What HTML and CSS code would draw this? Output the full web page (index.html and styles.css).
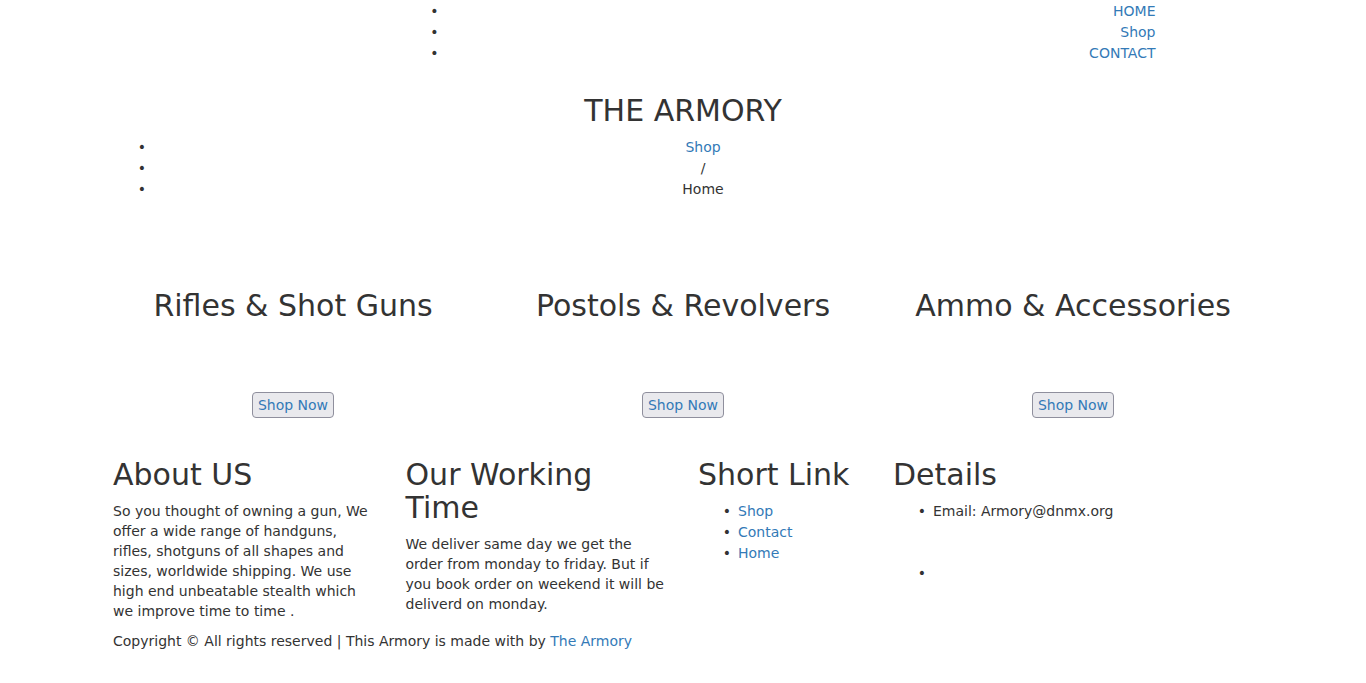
FILE: index.html
```html
<!DOCTYPE html>
<html lang="en">
<head>
<meta charset="utf-8">
<title>The Armory</title>
<link rel="stylesheet" href="styles.css">
</head>
<body>
<header class="container">
  <div class="row">
    <div class="col col-3"></div>
    <div class="col col-8">
      <ul class="topnav">
        <li><a href="#">HOME</a></li>
        <li><a href="#">Shop</a></li>
        <li><a href="#">CONTACT</a></li>
      </ul>
    </div>
  </div>
  <h2 class="brand">THE ARMORY</h2>
  <ul class="crumbs">
    <li><a href="#">Shop</a></li>
    <li>/</li>
    <li>Home</li>
  </ul>
</header>

<section class="container cats">
  <div class="row">
    <div class="col col-4 cat">
      <h2>Rifles &amp; Shot Guns</h2>
      <button class="shop"><a href="#">Shop Now</a></button>
    </div>
    <div class="col col-4 cat">
      <h2>Postols &amp; Revolvers</h2>
      <button class="shop"><a href="#">Shop Now</a></button>
    </div>
    <div class="col col-4 cat">
      <h2>Ammo &amp; Accessories</h2>
      <button class="shop"><a href="#">Shop Now</a></button>
    </div>
  </div>
</section>

<footer class="container">
  <div class="row foot">
    <div class="col col-3">
      <h2>About US</h2>
      <p>So you thought of owning a gun, We offer a wide range of handguns, rifles, shotguns of all shapes and sizes, worldwide shipping. We use high end unbeatable stealth which we improve time to time .</p>
    </div>
    <div class="col col-3">
      <h2>Our Working Time</h2>
      <p>We deliver same day we get the order from monday to friday. But if you book order on weekend it will be deliverd on monday.</p>
    </div>
    <div class="col col-2">
      <h2>Short Link</h2>
      <ul class="links">
        <li><a href="#">Shop</a></li>
        <li><a href="#">Contact</a></li>
        <li><a href="#">Home</a></li>
      </ul>
    </div>
    <div class="col col-3">
      <h2>Details</h2>
      <ul class="links">
        <li>Email: Armory@dnmx.org</li>
        <li class="gap"></li>
      </ul>
    </div>
  </div>
  <p class="copy">Copyright © All rights reserved | This Armory is made with by <a href="#">The Armory</a></p>
</footer>
</body>
</html>
```

FILE: styles.css
```css
* { box-sizing: border-box; }
html, body { margin: 0; padding: 0; }
body {
  font-family: "DejaVu Sans", sans-serif;
  font-size: 14px;
  line-height: 20px;
  color: #333;
  background: #fff;
  padding-top: 1px;
}
a { color: #337ab7; text-decoration: none; }
p { margin: 0 0 10px; }
ul { margin: 0 0 10px; padding-left: 40px; }
li { line-height: 21px; }
li::marker {
  content: "\2022\2002";
  font-family: "DejaVu Sans", sans-serif;
  font-size: 14px;
  color: #333;
}
h2 {
  font-size: 30px;
  font-weight: 400;
  line-height: 33px;
  margin: 20px 0 10px;
}

.container {
  width: 1170px;
  margin: 0 auto;
  padding: 0 15px;
}
.row {
  display: flex;
  margin: 0 -15px;
}
.col { padding: 0 15px; }
.col-2 { width: 195px; }
.col-3 { width: 292.5px; }
.col-4 { width: 390px; }
.col-8 { width: 780px; }

.topnav { text-align: right; }
.brand { text-align: center; }
.crumbs { text-align: center; }

.cats { padding-top: 59px; }
.cat { text-align: center; }
.cat h2 { margin-bottom: 70px; }
.shop {
  font-family: "DejaVu Sans", sans-serif;
  font-size: 14px;
  line-height: 20px;
  padding: 2px 5px;
  background: #e9e9ed;
  border: 1px solid #8f8f9d;
  border-radius: 4px;
  margin-bottom: 0;
}

.foot { padding-top: 19.5px; }
.gap { margin-top: 41px; }
.copy { margin: 0; }
```
